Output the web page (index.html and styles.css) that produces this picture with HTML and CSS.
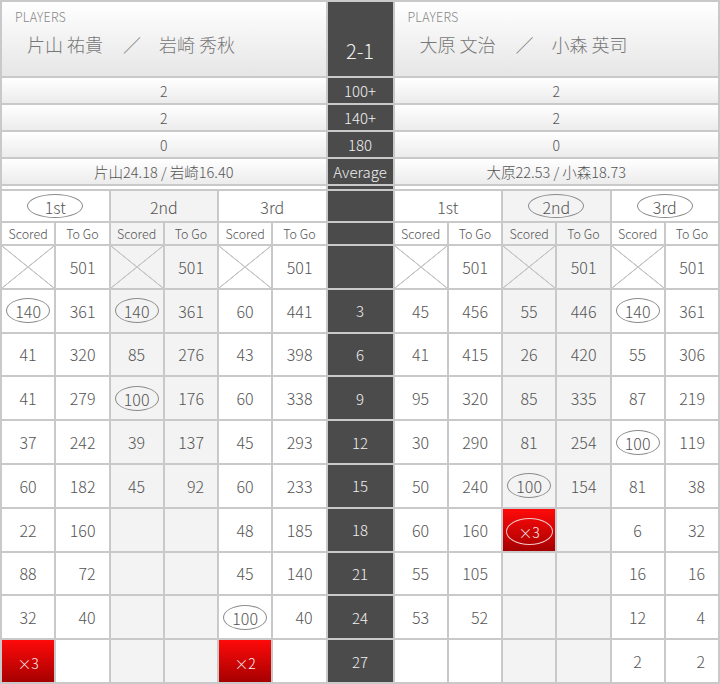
FILE: index.html
```html
<!DOCTYPE html>
<html lang="ja">
<head>
<meta charset="UTF-8">
<meta name="viewport" content="width=device-width, initial-scale=1.0">
<title>Score Sheet</title>
<link rel="stylesheet" href="styles.css">
</head>
<body>
<table class="sheet">
    <colgroup>
        <col class="sub"><col class="sub"><col class="sub"><col class="sub"><col class="sub"><col class="sub">
        <col class="mid">
        <col class="sub"><col class="sub"><col class="sub"><col class="sub"><col class="sub"><col class="sub">
    </colgroup>
    <tr class="head-row">
        <td colspan="6" class="players">
            <div class="players-label">PLAYERS</div>
            <div class="players-names">片山 祐貴<span class="slash">／</span>岩崎 秀秋</div>
        </td>
        <td class="dark score">2-1</td>
        <td colspan="6" class="players">
            <div class="players-label">PLAYERS</div>
            <div class="players-names">大原 文治<span class="slash">／</span>小森 英司</div>
        </td>
    </tr>
    <tr class="stat-row">
        <td colspan="6" class="stat">2</td><td class="dark">100+</td><td colspan="6" class="stat">2</td>
    </tr>
    <tr class="stat-row">
        <td colspan="6" class="stat">2</td><td class="dark">140+</td><td colspan="6" class="stat">2</td>
    </tr>
    <tr class="stat-row">
        <td colspan="6" class="stat">0</td><td class="dark">180</td><td colspan="6" class="stat">0</td>
    </tr>
    <tr class="stat-row">
        <td colspan="6" class="stat avg">片山24.18 / 岩崎16.40</td><td class="dark">Average</td><td colspan="6" class="stat avg">大原22.53 / 小森18.73</td>
    </tr>
    <tr class="spacer-row">
        <td colspan="6"></td><td class="dark"></td><td colspan="6"></td>
    </tr>
    <tr class="leg-row">
        <td colspan="2"><span class="leg won">1st</span></td>
        <td colspan="2" class="alt"><span class="leg">2nd</span></td>
        <td colspan="2"><span class="leg">3rd</span></td>
        <td class="dark"></td>
        <td colspan="2"><span class="leg">1st</span></td>
        <td colspan="2" class="alt"><span class="leg won">2nd</span></td>
        <td colspan="2"><span class="leg won">3rd</span></td>
    </tr>
    <tr class="label-row">
        <td>Scored</td><td>To Go</td>
        <td class="alt">Scored</td><td class="alt">To Go</td>
        <td>Scored</td><td>To Go</td>
        <td class="dark"></td>
        <td>Scored</td><td>To Go</td>
        <td class="alt">Scored</td><td class="alt">To Go</td>
        <td>Scored</td><td>To Go</td>
    </tr>
    <tr class="data-row">
        <td class="cross"></td><td class="togo">501</td>
        <td class="cross alt"></td><td class="togo alt">501</td>
        <td class="cross"></td><td class="togo">501</td>
        <td class="dark"></td>
        <td class="cross"></td><td class="togo">501</td>
        <td class="cross alt"></td><td class="togo alt">501</td>
        <td class="cross"></td><td class="togo">501</td>
    </tr>
    <tr class="data-row">
        <td><span class="ton">140</span></td><td class="togo">361</td>
        <td class="alt"><span class="ton">140</span></td><td class="togo alt">361</td>
        <td>60</td><td class="togo">441</td>
        <td class="dark">3</td>
        <td>45</td><td class="togo">456</td>
        <td class="alt">55</td><td class="togo alt">446</td>
        <td><span class="ton">140</span></td><td class="togo">361</td>
    </tr>
    <tr class="data-row">
        <td>41</td><td class="togo">320</td>
        <td class="alt">85</td><td class="togo alt">276</td>
        <td>43</td><td class="togo">398</td>
        <td class="dark">6</td>
        <td>41</td><td class="togo">415</td>
        <td class="alt">26</td><td class="togo alt">420</td>
        <td>55</td><td class="togo">306</td>
    </tr>
    <tr class="data-row">
        <td>41</td><td class="togo">279</td>
        <td class="alt"><span class="ton">100</span></td><td class="togo alt">176</td>
        <td>60</td><td class="togo">338</td>
        <td class="dark">9</td>
        <td>95</td><td class="togo">320</td>
        <td class="alt">85</td><td class="togo alt">335</td>
        <td>87</td><td class="togo">219</td>
    </tr>
    <tr class="data-row">
        <td>37</td><td class="togo">242</td>
        <td class="alt">39</td><td class="togo alt">137</td>
        <td>45</td><td class="togo">293</td>
        <td class="dark">12</td>
        <td>30</td><td class="togo">290</td>
        <td class="alt">81</td><td class="togo alt">254</td>
        <td><span class="ton">100</span></td><td class="togo">119</td>
    </tr>
    <tr class="data-row">
        <td>60</td><td class="togo">182</td>
        <td class="alt">45</td><td class="togo alt">92</td>
        <td>60</td><td class="togo">233</td>
        <td class="dark">15</td>
        <td>50</td><td class="togo">240</td>
        <td class="alt"><span class="ton">100</span></td><td class="togo alt">154</td>
        <td>81</td><td class="togo">38</td>
    </tr>
    <tr class="data-row">
        <td>22</td><td class="togo">160</td>
        <td class="alt"></td><td class="togo alt"></td>
        <td>48</td><td class="togo">185</td>
        <td class="dark">18</td>
        <td>60</td><td class="togo">160</td>
        <td class="finish"><span class="ton">×3</span></td><td class="togo alt"></td>
        <td>6</td><td class="togo">32</td>
    </tr>
    <tr class="data-row">
        <td>88</td><td class="togo">72</td>
        <td class="alt"></td><td class="togo alt"></td>
        <td>45</td><td class="togo">140</td>
        <td class="dark">21</td>
        <td>55</td><td class="togo">105</td>
        <td class="alt"></td><td class="togo alt"></td>
        <td>16</td><td class="togo">16</td>
    </tr>
    <tr class="data-row">
        <td>32</td><td class="togo">40</td>
        <td class="alt"></td><td class="togo alt"></td>
        <td><span class="ton">100</span></td><td class="togo">40</td>
        <td class="dark">24</td>
        <td>53</td><td class="togo">52</td>
        <td class="alt"></td><td class="togo alt"></td>
        <td>12</td><td class="togo">4</td>
    </tr>
    <tr class="data-row">
        <td class="finish">×3</td><td class="togo"></td>
        <td class="alt"></td><td class="togo alt"></td>
        <td class="finish">×2</td><td class="togo"></td>
        <td class="dark">27</td>
        <td></td><td class="togo"></td>
        <td class="alt"></td><td class="togo alt"></td>
        <td>2</td><td class="togo">2</td>
    </tr>
</table>
</body>
</html>
```

FILE: styles.css
```css
body {
    margin: 0;
    background: #fff;
    font-family: "Noto Sans CJK JP", "Noto Sans", sans-serif;
    font-weight: 300;
    color: #555;
}
.sheet {
    width: 720px;
    table-layout: fixed;
    border-collapse: separate;
    border-spacing: 2px;
    background: #c9c9c9;
}
.sheet col.sub {
    width: 52.25px;
}
.sheet col.mid {
    width: 65px;
}
.sheet td {
    padding: 0;
    background: #fff;
    text-align: center;
    vertical-align: middle;
}
.sheet td.alt {
    background: #f3f3f3;
}
.sheet td.dark {
    background: #4b4b4b;
    color: #f0f0f0;
    font-size: 15px;
}
.head-row {
    height: 74px;
}
.players {
    text-align: left !important;
    vertical-align: top !important;
    padding: 8px 13px 0 !important;
    background: linear-gradient(#ffffff, #e6e6e6) !important;
}
.players-label {
    font-size: 12.5px;
    line-height: 14px;
    letter-spacing: 0.2px;
    color: #888;
}
.players-names {
    margin-top: 10px;
    padding-left: 12px;
    font-size: 18px;
    line-height: 21px;
    color: #777;
}
.slash {
    margin: 0 18px 0 20px;
}
.sheet td.score {
    font-size: 20px;
    padding-top: 22px;
}
.stat-row {
    height: 25px;
}
.sheet td.stat {
    background: linear-gradient(#ffffff, #ececec);
    font-size: 14px;
}
.sheet td.avg {
    font-size: 14.5px;
}
.spacer-row {
    height: 3px;
}
.leg-row {
    height: 30px;
    font-size: 16px;
}
.leg {
    display: inline-block;
    width: 56px;
    height: 24px;
    line-height: 24px;
    border: 1px solid transparent;
    border-radius: 50%;
    box-sizing: border-box;
}
.leg.won {
    border-color: #8c8c8c;
}
.label-row {
    height: 21px;
    font-size: 12.5px;
}
.data-row {
    height: 41.8px;
    font-size: 16px;
}
.sheet td.togo {
    text-align: right;
    padding-right: 13px;
}
.ton {
    display: inline-block;
    width: 44px;
    height: 25px;
    line-height: 24px;
    border: 1px solid #8c8c8c;
    border-radius: 50%;
    box-sizing: border-box;
}
.sheet td.cross {
    background-image:
        linear-gradient(to top right, transparent calc(50% - 0.8px), #c4c4c4 calc(50% - 0.3px), #c4c4c4 calc(50% + 0.3px), transparent calc(50% + 0.8px)),
        linear-gradient(to bottom right, transparent calc(50% - 0.8px), #c4c4c4 calc(50% - 0.3px), #c4c4c4 calc(50% + 0.3px), transparent calc(50% + 0.8px));
}
.sheet td.finish {
    background: linear-gradient(#ff0a0a, #a60000);
    color: #fdf0f0;
    font-size: 14px;
    padding-top: 4px;
}
.finish .ton {
    width: 47px;
    height: 27px;
    line-height: 26px;
    border-color: #f3c8c8;
}
```
